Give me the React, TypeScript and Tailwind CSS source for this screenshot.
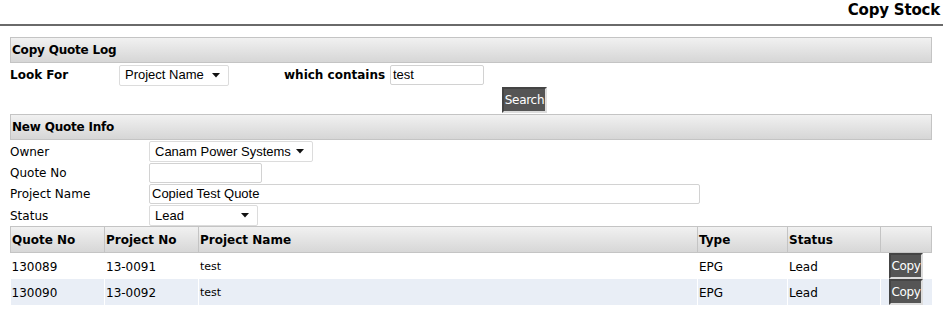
const verdana = "font-['DejaVu_Sans',Verdana,sans-serif]";
const arial = "font-['Liberation_Sans',Arial,sans-serif]";

const SectionBar = ({ title }: { title: string }) => (
  <div className="h-[26px] flex items-center px-[1px] border border-[#c4c4c4] bg-gradient-to-b from-[#f1f1f1] to-[#d6d6d6]">
    <span className={`${verdana} text-[12px] font-bold text-black tracking-[-0.2px]`}>{title}</span>
  </div>
);

const FakeSelect = ({ value, width }: { value: string; width: string }) => (
  <div
    className={`${width} h-[21px] flex items-center justify-between pl-[5px] pr-[8px] border border-[#dcdcdc] rounded-[2px] bg-white ${arial} text-[13px] text-black`}
  >
    <span>{value}</span>
    <svg width="8" height="5" viewBox="0 0 8 5">
      <path d="M0 0 L8 0 L4 4.5 Z" fill="#111" />
    </svg>
  </div>
);

const FakeInput = ({ value, width }: { value?: string; width: string }) => (
  <div
    className={`${width} h-[20px] flex items-center px-[2px] border border-[#d2d2d2] rounded-[2px] bg-white ${arial} text-[13px] text-black`}
  >
    {value}
  </div>
);

const DarkButton = ({ label }: { label: string }) => (
  <div
    className={`w-full inline-flex items-center justify-center bg-[#555] border-2 border-[#444] border-r-[#ddd] border-b-[#ddd] text-white ${verdana} text-[12px] tracking-[-0.3px]`}
  >
    {label}
  </div>
);

const rows = [
  { quote: '130089', project: '13-0091', name: 'test', type: 'EPG', status: 'Lead' },
  { quote: '130090', project: '13-0092', name: 'test', type: 'EPG', status: 'Lead' },
];

export default function App() {
  return (
    <div className={`w-[943px] h-[329px] bg-white ${verdana} text-black overflow-hidden`}>
      <div className="h-[26px] border-b-2 border-[#6a6a6a] flex items-end justify-end pr-[3px] pb-[3px]">
        <span className={`${verdana} text-[15px] font-bold tracking-[-0.2px]`}>Copy Stock</span>
      </div>

      <div className="w-[922px] ml-[10px] mt-[11px]">
        <SectionBar title="Copy Quote Log" />

        <div className="flex items-center h-[24px]">
          <span className="w-[109px] text-[12px] font-bold">Look For</span>
          <FakeSelect value="Project Name" width="w-[110px]" />
          <span className="ml-[55px] w-[106px] text-[12px] font-bold">which contains</span>
          <FakeInput value="test" width="w-[94px]" />
        </div>

        <div className="flex h-[26px]">
          <div className="ml-[492px] h-[26px] w-[45px] flex">
            <DarkButton label="Search" />
          </div>
        </div>

        <div className="mt-[1px]">
          <SectionBar title="New Quote Info" />
        </div>

        <div className="flex flex-col gap-[1px] mt-[1px] text-[12px]">
          <div className="flex items-center h-[21px]">
            <span className="w-[139px]">Owner</span>
            <FakeSelect value="Canam Power Systems" width="w-[164px]" />
          </div>
          <div className="flex items-center h-[20px]">
            <span className="w-[139px]">Quote No</span>
            <FakeInput width="w-[113px]" />
          </div>
          <div className="flex items-center h-[20px]">
            <span className="w-[139px]">Project Name</span>
            <FakeInput value="Copied Test Quote" width="w-[551px]" />
          </div>
          <div className="flex items-center h-[21px]">
            <span className="w-[139px]">Status</span>
            <FakeSelect value="Lead" width="w-[109px]" />
          </div>
        </div>

        <table className="w-[922px] border-collapse text-[12px]">
          <thead>
            <tr className="h-[26px] bg-gradient-to-b from-[#f1f1f1] to-[#d6d6d6] text-left">
              <th className="w-[94px] border border-[#c4c4c4] font-bold px-[1px]">Quote No</th>
              <th className="w-[94px] border border-[#c4c4c4] font-bold px-[1px]">Project No</th>
              <th className="w-[499px] border border-[#c4c4c4] font-bold px-[1px]">Project Name</th>
              <th className="w-[90px] border border-[#c4c4c4] font-bold px-[1px]">Type</th>
              <th className="w-[93px] border border-[#c4c4c4] font-bold px-[1px]">Status</th>
              <th className="border border-[#c4c4c4]"></th>
            </tr>
          </thead>
          <tbody>
            {rows.map((r, i) => (
              <tr key={r.quote} className={`h-[26px] ${i % 2 === 1 ? 'bg-[#e9eef6]' : 'bg-white'}`}>
                <td className="px-[1px] pt-[1px] border-r border-white">{r.quote}</td>
                <td className="px-[1px] pt-[1px] border-r border-white">{r.project}</td>
                <td className="px-[1px] pt-[2px] text-[11px] border-r border-white">{r.name}</td>
                <td className="px-[1px] pt-[1px] border-r border-white">{r.type}</td>
                <td className="px-[1px] pt-[1px] border-r border-white">{r.status}</td>
                <td className="p-0 align-top">
                  <div className="ml-[8px] h-[26px] w-[34px] flex">
                    <DarkButton label="Copy" />
                  </div>
                </td>
              </tr>
            ))}
          </tbody>
        </table>
      </div>
    </div>
  );
}
